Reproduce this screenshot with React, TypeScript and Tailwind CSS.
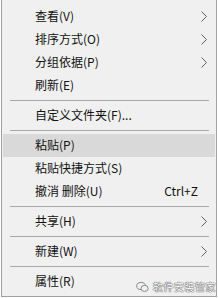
import React from 'react';

type Item = {
  label: string;
  arrow?: boolean;
  shortcut?: string;
  active?: boolean;
};

type Entry = Item | 'sep';

const entries: Entry[] = [
  { label: '查看(V)', arrow: true },
  { label: '排序方式(O)', arrow: true },
  { label: '分组依据(P)', arrow: true },
  { label: '刷新(E)' },
  'sep',
  { label: '自定义文件夹(F)...' },
  'sep',
  { label: '粘贴(P)', active: true },
  { label: '粘贴快捷方式(S)' },
  { label: '撤消 删除(U)', shortcut: 'Ctrl+Z' },
  'sep',
  { label: '共享(H)', arrow: true },
  'sep',
  { label: '新建(W)', arrow: true },
  'sep',
  { label: '属性(R)' },
];

function Chevron() {
  return (
    <svg width="6" height="11" viewBox="0 0 6 11" className="shrink-0">
      <polyline points="0.5,0.5 5.5,5.5 0.5,10.5" fill="none" stroke="#5f5f5f" strokeWidth="1" />
    </svg>
  );
}

function MenuRow({ item }: { item: Item }) {
  return (
    <div
      className={`flex h-[23px] items-center pl-[32px] pr-[8px] ${
        item.active ? 'bg-[#d9d9d9]' : ''
      }`}
    >
      <span className="flex-1 whitespace-nowrap">{item.label}</span>
      {item.shortcut && <span className="mr-[9px] whitespace-nowrap">{item.shortcut}</span>}
      {item.arrow && <Chevron />}
    </div>
  );
}

export default function App() {
  return (
    <div className="relative h-[298px] w-[218px] bg-white pl-[1px] font-['Noto_Sans_CJK_SC','Noto_Sans',sans-serif] text-[12px] text-[#111]">
      <div className="h-[297px] w-[216px] border-x border-b border-[#a0a0a0] bg-[#f0f0f0] px-[1px] pt-[4.5px]">
        {entries.map((e, i) =>
          e === 'sep' ? (
            <div key={i} className="flex h-[7px] items-center pl-[7px] pr-[6px]">
              <div className="h-px w-full bg-[#a8a8a8]" />
            </div>
          ) : (
            <MenuRow key={i} item={e} />
          )
        )}
      </div>

      {/* watermark */}
      <div className="absolute left-[136px] top-[279px] flex items-center gap-[4px] text-white">
        <svg width="13" height="12" viewBox="0 0 13 12">
          <ellipse cx="5" cy="5" rx="4.3" ry="3.6" fill="none" stroke="#8a8a8a" strokeWidth="1" />
          <ellipse cx="8.6" cy="7.4" rx="3.6" ry="3" fill="#f0f0f0" stroke="#8a8a8a" strokeWidth="1" />
        </svg>
        <span className="whitespace-nowrap text-[10px] tracking-[0.5px] [text-shadow:0_0_1px_#555,0_0_1px_#555,0_0_1px_#555]">
          软件安装管家
        </span>
      </div>
    </div>
  );
}
